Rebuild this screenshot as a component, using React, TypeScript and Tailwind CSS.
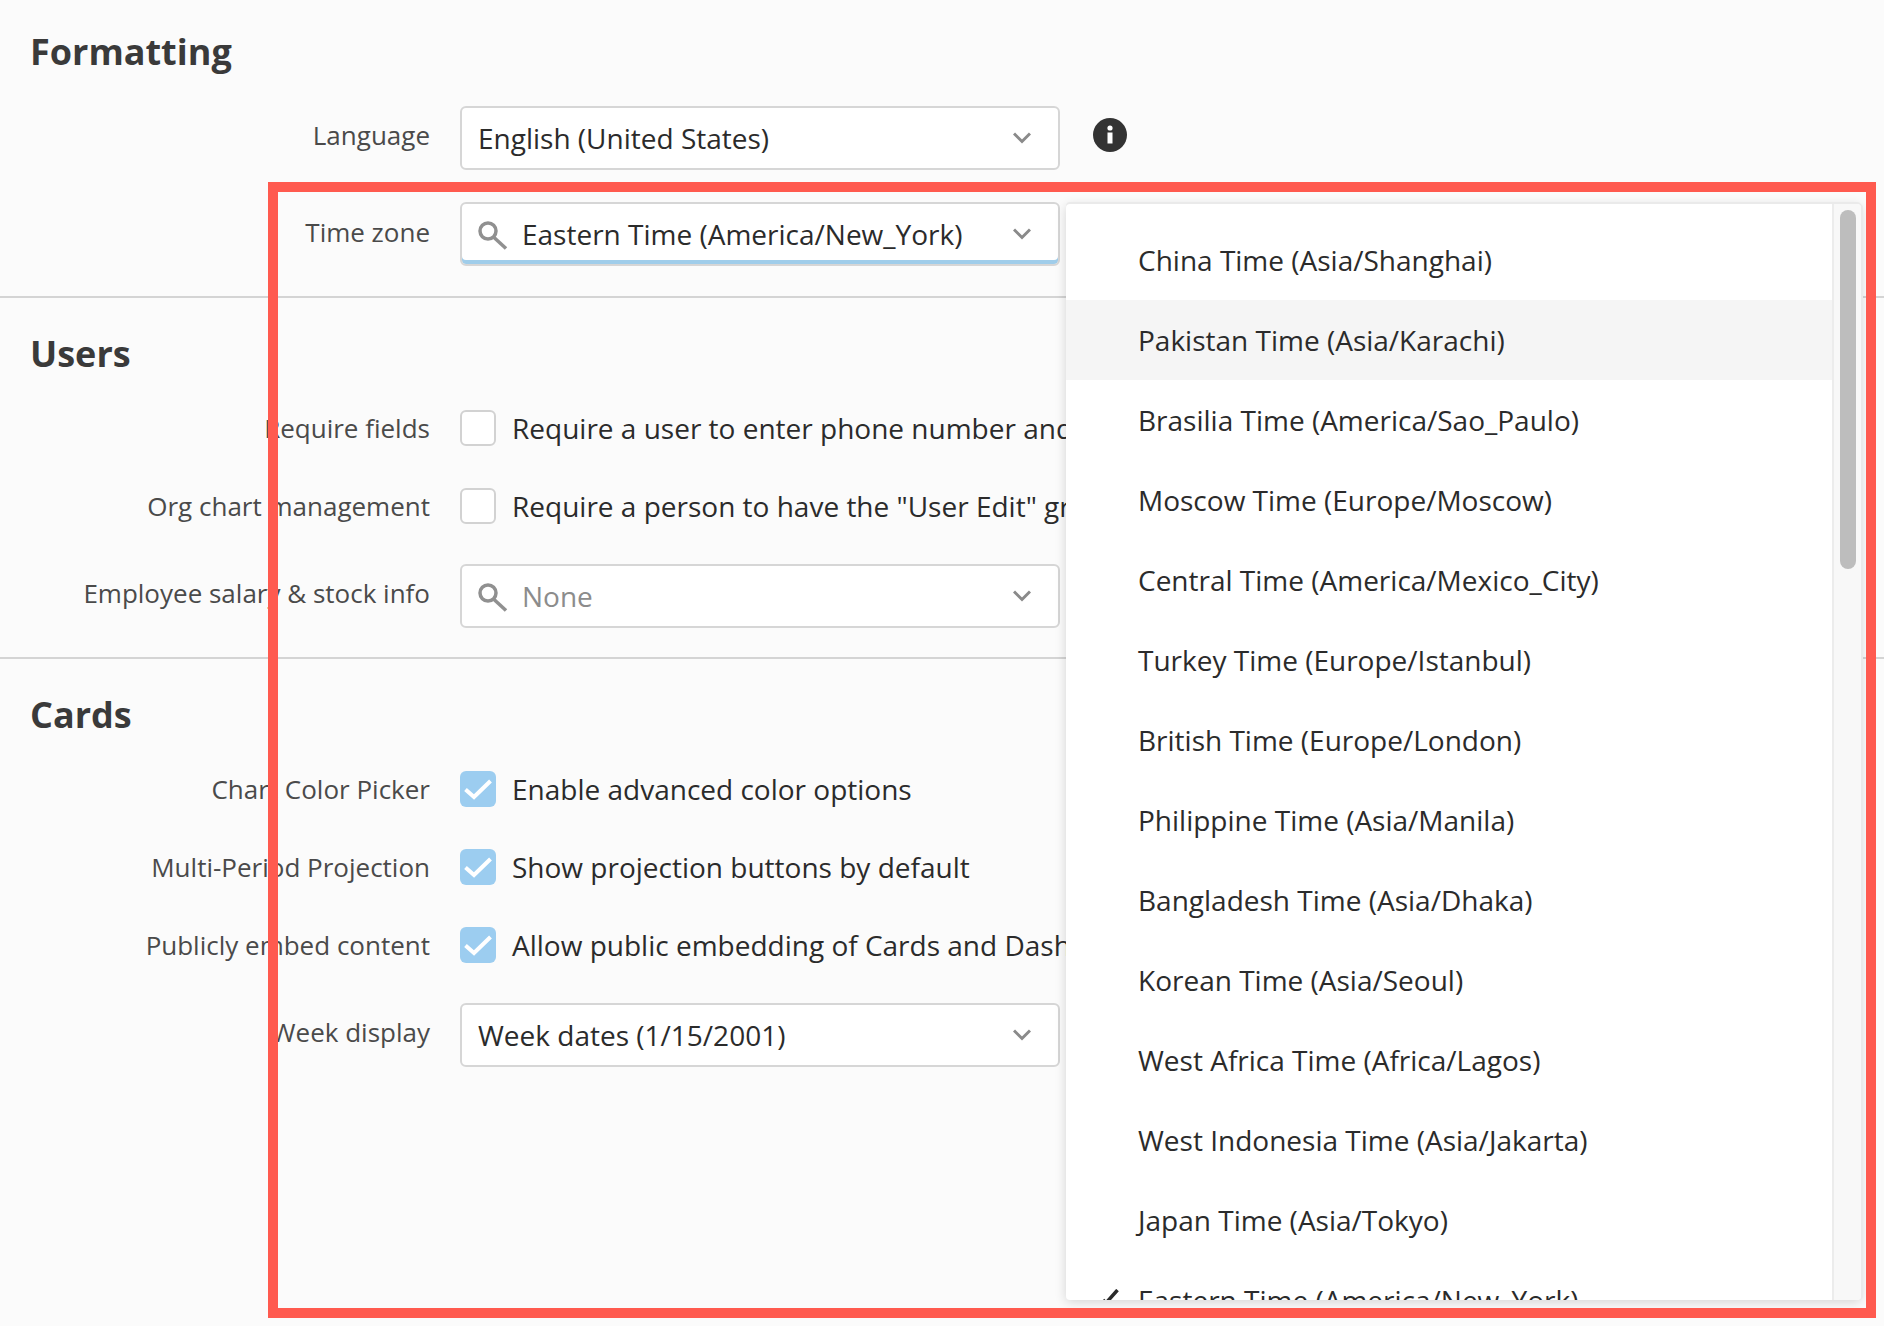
import React from "react";

const zones = [
  "China Time (Asia/Shanghai)",
  "Pakistan Time (Asia/Karachi)",
  "Brasilia Time (America/Sao_Paulo)",
  "Moscow Time (Europe/Moscow)",
  "Central Time (America/Mexico_City)",
  "Turkey Time (Europe/Istanbul)",
  "British Time (Europe/London)",
  "Philippine Time (Asia/Manila)",
  "Bangladesh Time (Asia/Dhaka)",
  "Korean Time (Asia/Seoul)",
  "West Africa Time (Africa/Lagos)",
  "West Indonesia Time (Asia/Jakarta)",
  "Japan Time (Asia/Tokyo)",
  "Eastern Time (America/New_York)",
];

function Chevron() {
  return (
    <svg width="18" height="12" viewBox="0 0 18 12" className="absolute right-[27px] top-1/2 -translate-y-1/2" fill="none" stroke="#8a8a8a" strokeWidth="3">
      <path d="M1 1.5 L9 9.5 L17 1.5" />
    </svg>
  );
}

function Search() {
  return (
    <svg width="32" height="32" viewBox="0 0 32 32" className="shrink-0" fill="none" stroke="#909090" strokeWidth="3.5">
      <circle cx="11" cy="13" r="8" />
      <path d="M16.5 19 L29 30.5" />
    </svg>
  );
}

function Select({ value, search, muted, focus }: { value: string; search?: boolean; muted?: boolean; focus?: boolean }) {
  return (
    <div
      className={`relative flex items-center w-[600px] h-[64px] bg-white rounded-[6px] border-2 border-[#d6d6d6] shrink-0 ${focus ? "shadow-[inset_0_-4px_0_#a0cdea]" : ""} ${search ? "pl-[15px]" : "pl-[16px]"}`}
    >
      {search && <Search />}
      <span className={`text-[28px] leading-[40px] whitespace-nowrap ${search ? "ml-[13px]" : ""} ${muted ? "text-[#8c8c8c]" : "text-[#2b2b2b]"}`}>{value}</span>
      <Chevron />
    </div>
  );
}

function Label({ children, offset }: { children: React.ReactNode; offset?: string }) {
  return <div className={`w-[430px] shrink-0 text-right text-[26px] leading-[36px] text-[#4a4a4a] whitespace-nowrap ${offset ?? ""}`}>{children}</div>;
}

function Check({ on }: { on?: boolean }) {
  return on ? (
    <div className="w-[36px] h-[36px] rounded-[6px] bg-[#9ccdf0] flex items-center justify-center shrink-0">
      <svg width="28" height="21" viewBox="0 0 28 21" fill="none" stroke="#fff" strokeWidth="4">
        <path d="M1.5 10.5 L10 18 L26.5 2" />
      </svg>
    </div>
  ) : (
    <div className="w-[36px] h-[36px] rounded-[6px] bg-white border-2 border-[#d2d2d2] shrink-0" />
  );
}

function CheckRow({ label, text, on, mb }: { label: string; text: string; on?: boolean; mb: string }) {
  return (
    <div className={`flex items-center h-[36px] ${mb}`}>
      <Label>{label}</Label>
      <div className="ml-[30px] flex items-center gap-[16px]">
        <Check on={on} />
        <span className="text-[28px] leading-[36px] text-[#2b2b2b] whitespace-nowrap">{text}</span>
      </div>
    </div>
  );
}

function Heading({ children, cls }: { children: React.ReactNode; cls: string }) {
  return <h2 className={`pl-[30px] text-[36px] leading-[48px] font-bold text-[#3a3a3a] ${cls}`}>{children}</h2>;
}

export default function App() {
  return (
    <div className="relative w-[1884px] h-[1326px] overflow-hidden bg-[#fbfbfb]" style={{ fontFamily: '"Open Sans", sans-serif' }}>
      {/* Formatting */}
      <section className="h-[298px] border-b-2 border-[#d4d4d4] pt-[28px]">
        <Heading cls="mb-[30px]">Formatting</Heading>
        <div className="flex items-start mb-[32px]">
          <Label offset="pt-[11px]">Language</Label>
          <div className="ml-[30px]"><Select value="English (United States)" /></div>
          <svg width="34" height="34" viewBox="0 0 34 34" className="ml-[33px] mt-[12px]">
            <circle cx="17" cy="17" r="17" fill="#333" />
            <circle cx="17" cy="10" r="2.6" fill="#fff" />
            <rect x="14.5" y="14.5" width="5" height="11" fill="#fff" />
          </svg>
        </div>
        <div className="flex items-start">
          <Label offset="pt-[12px]">Time zone</Label>
          <div className="ml-[30px]"><Select value="Eastern Time (America/New_York)" search focus /></div>
        </div>
      </section>

      {/* Users */}
      <section className="h-[361px] border-b-2 border-[#d4d4d4] pt-[32px]">
        <Heading cls="mb-[32px]">Users</Heading>
        <CheckRow label="Require fields" text="Require a user to enter phone number and email address" mb="mb-[42px]" />
        <CheckRow label="Org chart management" text={'Require a person to have the "User Edit" group'} mb="mb-[40px]" />
        <div className="flex items-start">
          <Label offset="pt-[11px]">Employee salary &amp; stock info</Label>
          <div className="ml-[30px]"><Select value="None" search muted /></div>
        </div>
      </section>

      {/* Cards */}
      <section className="pt-[32px]">
        <Heading cls="mb-[32px]">Cards</Heading>
        <CheckRow label="Chart Color Picker" text="Enable advanced color options" on mb="mb-[42px]" />
        <CheckRow label="Multi-Period Projection" text="Show projection buttons by default" on mb="mb-[42px]" />
        <CheckRow label="Publicly embed content" text="Allow public embedding of Cards and Dashboards" on mb="mb-[40px]" />
        <div className="flex items-start">
          <Label offset="pt-[11px]">Week display</Label>
          <div className="ml-[30px]"><Select value="Week dates (1/15/2001)" /></div>
        </div>
      </section>

      {/* Open time zone menu */}
      <div className="absolute left-[1066px] top-[204px] w-[795px] h-[1096px] bg-white rounded-[4px] overflow-hidden flex shadow-[0_-2px_0_#eaeaea,2px_0_0_#eaeaea,0_2px_12px_rgba(0,0,0,0.16)]">
        <div className="flex-1 pt-[16px]">
          {zones.map((z, i) => (
            <div key={z} className={`relative h-[80px] flex items-center pl-[72px] text-[28px] text-[#2b2b2b] whitespace-nowrap ${i === 1 ? "bg-[#f5f5f5]" : ""}`}>
              {z === "Eastern Time (America/New_York)" && (
                <svg width="18" height="20" viewBox="0 0 18 20" className="absolute left-[36px] top-[29px]" fill="none" stroke="#2b2b2b" strokeWidth="3.5">
                  <path d="M15.5 1 L4 14 L1 11" />
                </svg>
              )}
              {z}
            </div>
          ))}
        </div>
        <div className="w-[29px] shrink-0 bg-[#f8f8f8] border-l-2 border-[#ececec] pl-[6px] pt-[6px]">
          <div className="w-[16px] h-[359px] rounded-full bg-[#bdbdbd]" />
        </div>
      </div>

      {/* Highlight frame */}
      <div className="absolute left-[268px] top-[182px] w-[1608px] h-[1136px] border-[10px] border-[#ff5a4f] pointer-events-none" />
    </div>
  );
}
